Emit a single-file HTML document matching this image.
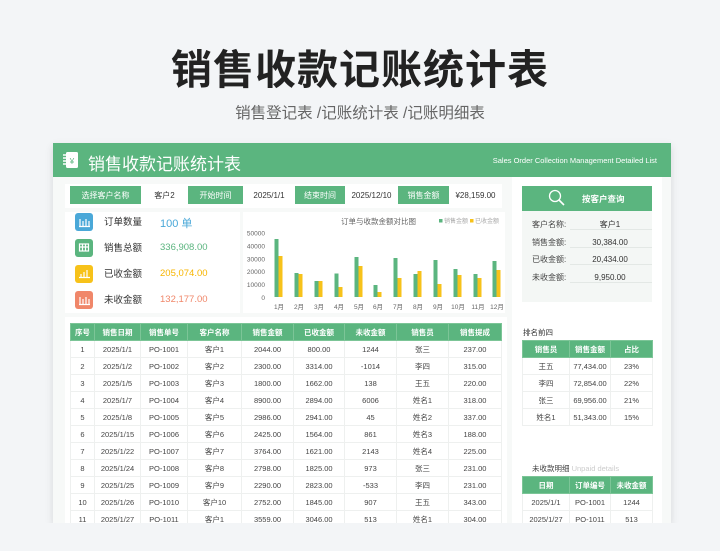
<!DOCTYPE html>
<html><head><meta charset="utf-8">
<style>
*{margin:0;padding:0;box-sizing:border-box}
body{width:720px;height:551px;background:#f3f5f7;font-family:"Liberation Sans","Noto Sans CJK SC",sans-serif;position:relative;overflow:hidden;color:#333}
.a{position:absolute}
.g{background:#5bb57f;color:#fff}
.c{display:flex;align-items:center;justify-content:center;font-size:8px}
table{border-collapse:collapse;position:absolute;font-size:7.5px;color:#444;table-layout:fixed}
td,th{height:17px;text-align:center;border:1px solid #eef0ef;padding:0;white-space:nowrap}
th{background:#5bb57f;color:#fff;font-weight:bold;border-color:#7cc597}
</style></head><body>
<div class="a" style="left:0;top:36px;width:720px;text-align:center;font-size:41px;font-weight:bold;color:#222;letter-spacing:1px">销售收款记账统计表</div>
<div class="a" style="left:0;top:101px;width:720px;text-align:center;font-size:15.5px;color:#666">销售登记表 /记账统计表 /记账明细表</div>

<div class="a" style="left:53px;top:143px;width:618px;height:380px;background:#f7f9f8;box-shadow:0 3px 8px rgba(0,0,0,.12)"></div>
<div class="a g" style="left:53px;top:143px;width:618px;height:34px"></div>
<svg class="a" style="left:62px;top:151px" width="18" height="18" viewBox="0 0 18 18"><rect x="4" y="1" width="12" height="16" rx="1.5" fill="#fff"/><path d="M1 4h4M1 7h4M1 10h4M1 13h4" stroke="#fff" stroke-width="1.4"/><text x="10" y="13" font-size="8" fill="#5bb57f" text-anchor="middle" font-family="Liberation Sans">¥</text></svg>
<div class="a" style="left:88px;top:150px;font-size:17px;color:#fff">销售收款记账统计表</div>
<div class="a" style="right:63px;top:156px;font-size:7.5px;color:#fff">Sales Order Collection Management Detailed List</div>

<div class="a" style="left:65px;top:184px;width:437px;height:24px;background:#fff"></div>
<div class="a g c" style="left:70px;top:186px;width:71px;height:18px">选择客户名称</div>
<div class="a c" style="left:141px;top:186px;width:47px;height:18px;color:#333">客户2</div>
<div class="a g c" style="left:188px;top:186px;width:55px;height:18px">开始时间</div>
<div class="a c" style="left:243px;top:186px;width:52px;height:18px;color:#333">2025/1/1</div>
<div class="a g c" style="left:295px;top:186px;width:50px;height:18px">结束时间</div>
<div class="a c" style="left:345px;top:186px;width:53px;height:18px;color:#333">2025/12/10</div>
<div class="a g c" style="left:398px;top:186px;width:51px;height:18px">销售金额</div>
<div class="a c" style="left:449px;top:186px;width:53px;height:18px;color:#333">¥28,159.00</div>

<div class="a" style="left:65px;top:212px;width:175px;height:101px;background:#fff"></div>
<div class="a" style="left:75px;top:213px;width:18px;height:18px;background:#4aa8d8;border-radius:3px"></div>
<div class="a" style="left:75px;top:239px;width:18px;height:18px;background:#5bb57f;border-radius:3px"></div>
<div class="a" style="left:75px;top:265px;width:18px;height:18px;background:#f7c21a;border-radius:3px"></div>
<div class="a" style="left:75px;top:291px;width:18px;height:18px;background:#f0876a;border-radius:3px"></div>
<svg class="a" style="left:75px;top:213px" width="18" height="96"><g fill="none" stroke="#fff" stroke-width="1.2"><path d="M5 6v7M8 8v5M11 6v7M14 8v5M4 13.5h11"/><rect x="4.5" y="31" width="9" height="7"/><path d="M4.5 34h9M7.5 31v7M10.5 31v7"/><path d="M6 64v-3M9 64v-5M12 64v-7M4 64.5h11"/><path d="M5 84v7M8 86v5M11 84v7M14 86v5M4 91.5h11"/></g></svg>
<div class="a" style="left:104px;top:216px;font-size:9.5px;color:#333;line-height:13px">订单数量<br><br>销售总额<br><br>已收金额<br><br>未收金额</div>
<div class="a" style="left:160px;top:215px;font-size:11px;color:#4aa8d8">100 单</div>
<div class="a" style="left:160px;top:242px;font-size:9.5px;color:#5bb57f">336,908.00</div>
<div class="a" style="left:160px;top:268px;font-size:9.5px;color:#f7b500">205,074.00</div>
<div class="a" style="left:160px;top:294px;font-size:9.5px;color:#f0876a">132,177.00</div>

<div class="a" style="left:243px;top:212px;width:262px;height:101px;background:#fff"></div>
<svg class="a" style="left:243px;top:212px" width="262" height="101" font-family="Liberation Sans,Noto Sans CJK SC" font-size="6.5" fill="#666">
<text x="98" y="12" font-size="7.5">订单与收款金额对比图</text>
<rect x="196" y="7" width="3.5" height="3.5" fill="#5bb57f"/><text x="201" y="11" font-size="6" fill="#aaa">销售金额</text>
<rect x="227" y="7" width="3.5" height="3.5" fill="#f7c21a"/><text x="232" y="11" font-size="6" fill="#aaa">已收金额</text>
<g text-anchor="end"><text x="22" y="23.5">50000</text><text x="22" y="36.5">40000</text><text x="22" y="49.5">30000</text><text x="22" y="62">20000</text><text x="22" y="75">10000</text><text x="22" y="88">0</text></g>
<g id="b"></g>
<g text-anchor="middle">
<text x="36" y="97">1月</text><text x="56" y="97">2月</text><text x="76" y="97">3月</text><text x="96" y="97">4月</text><text x="116" y="97">5月</text><text x="135" y="97">6月</text><text x="155" y="97">7月</text><text x="175" y="97">8月</text><text x="195" y="97">9月</text><text x="215" y="97">10月</text><text x="235" y="97">11月</text><text x="254" y="97">12月</text></g>
<g fill="#5bb57f">
<rect x="31.5" y="27" width="4" height="58"/><rect x="51.5" y="61" width="4" height="24"/><rect x="71.5" y="69" width="4" height="16"/><rect x="91.5" y="61.5" width="4" height="23.5"/><rect x="111.5" y="45" width="4" height="40"/><rect x="130.5" y="73" width="4" height="12"/><rect x="150.5" y="46" width="4" height="39"/><rect x="170.5" y="62" width="4" height="23"/><rect x="190.5" y="48" width="4" height="37"/><rect x="210.5" y="57" width="4" height="28"/><rect x="230.5" y="62" width="4" height="23"/><rect x="249.5" y="49" width="4" height="36"/></g>
<g fill="#f7c21a">
<rect x="35.5" y="44" width="4" height="41"/><rect x="55.5" y="62" width="4" height="23"/><rect x="75.5" y="69" width="4" height="16"/><rect x="95.5" y="75" width="4" height="10"/><rect x="115.5" y="54" width="4" height="31"/><rect x="134.5" y="80" width="4" height="5"/><rect x="154.5" y="66" width="4" height="19"/><rect x="174.5" y="59" width="4" height="26"/><rect x="194.5" y="72" width="4" height="13"/><rect x="214.5" y="63" width="4" height="22"/><rect x="234.5" y="66" width="4" height="19"/><rect x="253.5" y="58" width="4" height="27"/></g>
</svg>

<div class="a" style="left:512px;top:177px;width:150px;height:346px;background:#fff"></div>
<div class="a" style="left:522px;top:186px;width:130px;height:116px;background:#f4f7f5"></div>
<div class="a g" style="left:522px;top:186px;width:130px;height:25px"></div>
<svg class="a" style="left:548px;top:189px" width="18" height="18"><circle cx="7" cy="7" r="5.5" fill="none" stroke="#fff" stroke-width="1.3"/><path d="M11 11l5 5" stroke="#fff" stroke-width="1.6"/></svg>
<div class="a" style="left:582px;top:193px;font-size:8.5px;color:#fff;font-weight:bold">按客户查询</div>
<div class="a" style="left:532px;top:216px;font-size:8px;color:#444;line-height:17.5px">客户名称:<br>销售金额:<br>已收金额:<br>未收金额:</div>
<div class="a" style="left:570px;top:216px;width:80px;text-align:center;font-size:8px;color:#333;line-height:17.5px">客户1<br>30,384.00<br>20,434.00<br>9,950.00</div>
<div class="a" style="left:570px;top:229px;width:82px;border-top:1px solid #e3e8e5"></div>
<div class="a" style="left:570px;top:247px;width:82px;border-top:1px solid #e3e8e5"></div>
<div class="a" style="left:570px;top:264px;width:82px;border-top:1px solid #e3e8e5"></div>
<div class="a" style="left:570px;top:282px;width:82px;border-top:1px solid #e3e8e5"></div>

<div class="a" style="left:65px;top:317px;width:442px;height:206px;background:#fff"></div>
<table style="left:70px;top:323px;width:431px">
<colgroup><col style="width:24px"><col style="width:46px"><col style="width:47px"><col style="width:54px"><col style="width:52px"><col style="width:51px"><col style="width:52px"><col style="width:52px"><col style="width:53px"></colgroup>
<tr><th>序号</th><th>销售日期</th><th>销售单号</th><th>客户名称</th><th>销售金额</th><th>已收金额</th><th>未收金额</th><th>销售员</th><th>销售提成</th></tr>
<tr><td>1</td><td>2025/1/1</td><td>PO-1001</td><td>客户1</td><td>2044.00</td><td>800.00</td><td>1244</td><td>张三</td><td>237.00</td></tr>
<tr><td>2</td><td>2025/1/2</td><td>PO-1002</td><td>客户2</td><td>2300.00</td><td>3314.00</td><td>-1014</td><td>李四</td><td>315.00</td></tr>
<tr><td>3</td><td>2025/1/5</td><td>PO-1003</td><td>客户3</td><td>1800.00</td><td>1662.00</td><td>138</td><td>王五</td><td>220.00</td></tr>
<tr><td>4</td><td>2025/1/7</td><td>PO-1004</td><td>客户4</td><td>8900.00</td><td>2894.00</td><td>6006</td><td>姓名1</td><td>318.00</td></tr>
<tr><td>5</td><td>2025/1/8</td><td>PO-1005</td><td>客户5</td><td>2986.00</td><td>2941.00</td><td>45</td><td>姓名2</td><td>337.00</td></tr>
<tr><td>6</td><td>2025/1/15</td><td>PO-1006</td><td>客户6</td><td>2425.00</td><td>1564.00</td><td>861</td><td>姓名3</td><td>188.00</td></tr>
<tr><td>7</td><td>2025/1/22</td><td>PO-1007</td><td>客户7</td><td>3764.00</td><td>1621.00</td><td>2143</td><td>姓名4</td><td>225.00</td></tr>
<tr><td>8</td><td>2025/1/24</td><td>PO-1008</td><td>客户8</td><td>2798.00</td><td>1825.00</td><td>973</td><td>张三</td><td>231.00</td></tr>
<tr><td>9</td><td>2025/1/25</td><td>PO-1009</td><td>客户9</td><td>2290.00</td><td>2823.00</td><td>-533</td><td>李四</td><td>231.00</td></tr>
<tr><td>10</td><td>2025/1/26</td><td>PO-1010</td><td>客户10</td><td>2752.00</td><td>1845.00</td><td>907</td><td>王五</td><td>343.00</td></tr>
<tr><td>11</td><td>2025/1/27</td><td>PO-1011</td><td>客户1</td><td>3559.00</td><td>3046.00</td><td>513</td><td>姓名1</td><td>304.00</td></tr>
</table>

<div class="a" style="left:523px;top:327px;font-size:7.5px;color:#333">排名前四</div>
<table style="left:522px;top:340px;width:130px">
<colgroup><col style="width:47px"><col style="width:41px"><col style="width:42px"></colgroup>
<tr><th>销售员</th><th>销售金额</th><th>占比</th></tr>
<tr><td>王五</td><td>77,434.00</td><td>23%</td></tr>
<tr><td>李四</td><td>72,854.00</td><td>22%</td></tr>
<tr><td>张三</td><td>69,956.00</td><td>21%</td></tr>
<tr><td>姓名1</td><td>51,343.00</td><td>15%</td></tr>
</table>
<div class="a" style="left:532px;top:463px;font-size:7.5px;color:#444">未收款明细 <span style="color:#ccc">Unpaid details</span></div>
<table style="left:522px;top:476px;width:130px">
<colgroup><col style="width:47px"><col style="width:41px"><col style="width:42px"></colgroup>
<tr><th>日期</th><th>订单编号</th><th>未收金额</th></tr>
<tr><td>2025/1/1</td><td>PO-1001</td><td>1244</td></tr>
<tr><td>2025/1/27</td><td>PO-1011</td><td>513</td></tr>
</table>
<div class="a" style="left:0;top:523px;width:720px;height:28px;background:#f3f5f7"></div>
</body></html>
